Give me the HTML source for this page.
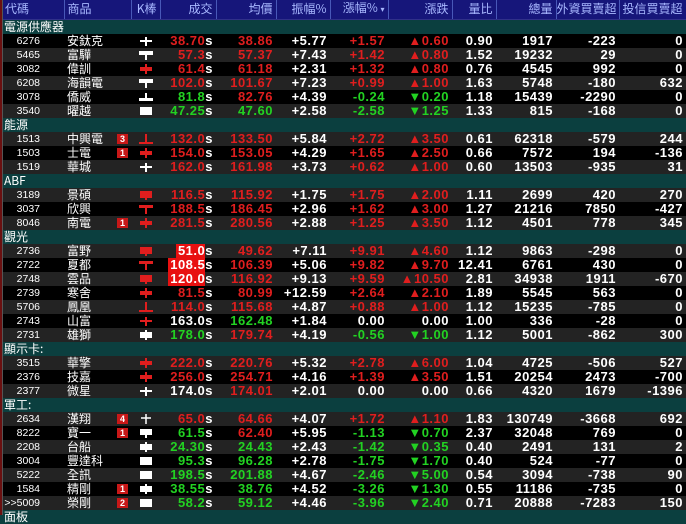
<!DOCTYPE html>
<html><head><meta charset="utf-8"><style>
*{margin:0;padding:0;box-sizing:border-box}
body{width:686px;height:515px;overflow:hidden;background:#000;font-family:"Liberation Sans","Noto Sans CJK TC",sans-serif;position:relative}
table{border-collapse:collapse;table-layout:fixed;width:686px}
td{height:14px;line-height:14px;white-space:nowrap;overflow:hidden;padding:0;font-size:13px;font-weight:bold;color:#fff;text-align:right;padding-right:3px;letter-spacing:0.5px}
tr.h td{height:19px;background:#16167a;color:#a8b8ff;font-weight:normal;font-size:12px;letter-spacing:0;border-right:1px solid #4858b8;border-bottom:1px solid #30308a;font-family:"Noto Sans CJK TC",sans-serif}
tr.gp td{background:#0b3f3f;color:#fff;font-weight:normal;font-size:12px;letter-spacing:0;text-align:left;padding-left:4px;font-family:"Noto Sans CJK TC",sans-serif}
tr:nth-child(odd) td{background:#000}
tr:nth-child(even) td{background:#232323}
tr.gp td{background:#0b3f3f !important}
tr.h td{background:#16167a !important}
td.c{font-weight:normal;font-size:10.5px;letter-spacing:0;padding-right:24px;color:#fff}
td.n{font-weight:normal;font-size:12px;letter-spacing:0;text-align:left;padding-left:3px;position:relative;font-family:"Noto Sans CJK TC",sans-serif;overflow:visible}
td.k{text-align:center;padding:0}
td.k svg{vertical-align:middle}
.r{color:#e01e1e}.g{color:#22d222}.w{color:#fff}
.lim{background:#e81010;color:#fff;padding-left:2px}
.s{color:#fff}
.b{position:absolute;left:53px;top:2px;width:11px;height:10px;background:#c81818;color:#fff;font-size:9px;line-height:10px;text-align:center;font-family:"Liberation Sans",sans-serif;font-weight:bold}
.lb{position:absolute;left:0;top:0;width:2px;height:515px;background:#6a1010}
.lb2{position:absolute;left:2px;top:0;width:1px;height:515px;background:#555}
</style></head><body>
<svg width="0" height="0" style="position:absolute"><defs>
<g id="cw"><path d="M2 6H14M8 2V11" stroke="#fff" stroke-width="2"/></g>
<g id="cr"><path d="M2 6H14M8 2V11" stroke="#e01e1e" stroke-width="2"/></g>
<g id="tw"><rect x="1" y="2" width="14" height="4" fill="#fff"/><rect x="7" y="6" width="2" height="5" fill="#fff"/></g>
<g id="tr"><rect x="1" y="2" width="14" height="3" fill="#e01e1e"/><rect x="7" y="5" width="2" height="6" fill="#e01e1e"/></g>
<g id="iw"><rect x="7" y="2" width="2" height="6" fill="#fff"/><rect x="1" y="7" width="14" height="3" fill="#fff"/></g>
<g id="ir"><rect x="7" y="1" width="2" height="8" fill="#e01e1e"/><rect x="1" y="9" width="14" height="2" fill="#e01e1e"/></g>
<g id="bw"><rect x="2" y="2" width="12" height="8" fill="#fff"/></g>
<g id="br"><rect x="2" y="2" width="12" height="7" fill="#e01e1e"/><rect x="7" y="9" width="2" height="2" fill="#e01e1e"/></g>
<g id="xr"><rect x="2" y="4" width="12" height="4" fill="#e01e1e"/><rect x="7" y="1" width="2" height="10" fill="#e01e1e"/></g>
<g id="xw"><rect x="2" y="3" width="12" height="6" fill="#fff"/><rect x="7" y="1" width="2" height="10" fill="#fff"/></g>
<g id="pw"><rect x="2" y="2" width="12" height="6" fill="#fff"/><rect x="7" y="8" width="2" height="3" fill="#fff"/></g>
<g id="tc"><path d="M3 5H13M8 1V11" stroke="#fff" stroke-width="1.5"/></g>
</defs></svg>
<table>
<colgroup><col width="64"><col width="67"><col width="29"><col width="56"><col width="60"><col width="54"><col width="58"><col width="64"><col width="44"><col width="60"><col width="63"><col width="67"></colgroup>
<tr class="h"><td style="text-align:left;padding-left:5px">代碼</td><td style="text-align:left;padding-left:3px">商品</td><td>K棒</td><td>成交</td><td>均價</td><td>振幅%</td><td>漲幅% <span style="font-size:8px">▾</span></td><td>漲跌</td><td>量比</td><td>總量</td><td>外資買賣超</td><td>投信買賣超</td></tr>
<tr class="gp"><td colspan="12">電源供應器</td></tr>
<tr><td class="c">6276</td><td class="n">安鈦克</td><td class="k"><svg width="16" height="12"><use href="#cw"/></svg></td><td class="r">38.70<span class="s">s</span></td><td class="r">38.86</td><td>+5.77</td><td class="r">+1.57</td><td class="r">▲0.60</td><td>0.90</td><td>1917</td><td>-223</td><td>0</td></tr>
<tr><td class="c">5465</td><td class="n">富驊</td><td class="k"><svg width="16" height="12"><use href="#tw"/></svg></td><td class="r">57.3<span class="s">s</span></td><td class="r">57.37</td><td>+7.43</td><td class="r">+1.42</td><td class="r">▲0.80</td><td>1.52</td><td>19232</td><td>29</td><td>0</td></tr>
<tr><td class="c">3082</td><td class="n">偉訓</td><td class="k"><svg width="16" height="12"><use href="#xr"/></svg></td><td class="r">61.4<span class="s">s</span></td><td class="r">61.18</td><td>+2.31</td><td class="r">+1.32</td><td class="r">▲0.80</td><td>0.76</td><td>4545</td><td>992</td><td>0</td></tr>
<tr><td class="c">6208</td><td class="n">海韻電</td><td class="k"><svg width="16" height="12"><use href="#tw"/></svg></td><td class="r">102.0<span class="s">s</span></td><td class="r">101.67</td><td>+7.23</td><td class="r">+0.99</td><td class="r">▲1.00</td><td>1.63</td><td>5748</td><td>-180</td><td>632</td></tr>
<tr><td class="c">3078</td><td class="n">僑威</td><td class="k"><svg width="16" height="12"><use href="#iw"/></svg></td><td class="g">81.8<span class="s">s</span></td><td class="r">82.76</td><td>+4.39</td><td class="g">-0.24</td><td class="g">▼0.20</td><td>1.18</td><td>15439</td><td>-2290</td><td>0</td></tr>
<tr><td class="c">3540</td><td class="n">曜越</td><td class="k"><svg width="16" height="12"><use href="#bw"/></svg></td><td class="g">47.25<span class="s">s</span></td><td class="g">47.60</td><td>+2.58</td><td class="g">-2.58</td><td class="g">▼1.25</td><td>1.33</td><td>815</td><td>-168</td><td>0</td></tr>
<tr class="gp"><td colspan="12">能源</td></tr>
<tr><td class="c">1513</td><td class="n">中興電<span class="b">3</span></td><td class="k"><svg width="16" height="12"><use href="#ir"/></svg></td><td class="r">132.0<span class="s">s</span></td><td class="r">133.50</td><td>+5.84</td><td class="r">+2.72</td><td class="r">▲3.50</td><td>0.61</td><td>62318</td><td>-579</td><td>244</td></tr>
<tr><td class="c">1503</td><td class="n">士電<span class="b">1</span></td><td class="k"><svg width="16" height="12"><use href="#xr"/></svg></td><td class="r">154.0<span class="s">s</span></td><td class="r">153.05</td><td>+4.29</td><td class="r">+1.65</td><td class="r">▲2.50</td><td>0.66</td><td>7572</td><td>194</td><td>-136</td></tr>
<tr><td class="c">1519</td><td class="n">華城</td><td class="k"><svg width="16" height="12"><use href="#cw"/></svg></td><td class="r">162.0<span class="s">s</span></td><td class="r">161.98</td><td>+3.73</td><td class="r">+0.62</td><td class="r">▲1.00</td><td>0.60</td><td>13503</td><td>-935</td><td>31</td></tr>
<tr class="gp"><td colspan="12">ABF</td></tr>
<tr><td class="c">3189</td><td class="n">景碩</td><td class="k"><svg width="16" height="12"><use href="#br"/></svg></td><td class="r">116.5<span class="s">s</span></td><td class="r">115.92</td><td>+1.75</td><td class="r">+1.75</td><td class="r">▲2.00</td><td>1.11</td><td>2699</td><td>420</td><td>270</td></tr>
<tr><td class="c">3037</td><td class="n">欣興</td><td class="k"><svg width="16" height="12"><use href="#tr"/></svg></td><td class="r">188.5<span class="s">s</span></td><td class="r">186.45</td><td>+2.96</td><td class="r">+1.62</td><td class="r">▲3.00</td><td>1.27</td><td>21216</td><td>7850</td><td>-427</td></tr>
<tr><td class="c">8046</td><td class="n">南電<span class="b">1</span></td><td class="k"><svg width="16" height="12"><use href="#xr"/></svg></td><td class="r">281.5<span class="s">s</span></td><td class="r">280.56</td><td>+2.88</td><td class="r">+1.25</td><td class="r">▲3.50</td><td>1.12</td><td>4501</td><td>778</td><td>345</td></tr>
<tr class="gp"><td colspan="12">觀光</td></tr>
<tr><td class="c">2736</td><td class="n">富野</td><td class="k"><svg width="16" height="12"><use href="#br"/></svg></td><td><span class="lim">51.0</span>s</td><td class="r">49.62</td><td>+7.11</td><td class="r">+9.91</td><td class="r">▲4.60</td><td>1.12</td><td>9863</td><td>-298</td><td>0</td></tr>
<tr><td class="c">2722</td><td class="n">夏都</td><td class="k"><svg width="16" height="12"><use href="#tr"/></svg></td><td><span class="lim">108.5</span>s</td><td class="r">106.39</td><td>+5.06</td><td class="r">+9.82</td><td class="r">▲9.70</td><td>12.41</td><td>6761</td><td>430</td><td>0</td></tr>
<tr><td class="c">2748</td><td class="n">雲品</td><td class="k"><svg width="16" height="12"><use href="#br"/></svg></td><td><span class="lim">120.0</span>s</td><td class="r">116.92</td><td>+9.13</td><td class="r">+9.59</td><td class="r">▲10.50</td><td>2.81</td><td>34938</td><td>1911</td><td>-670</td></tr>
<tr><td class="c">2739</td><td class="n">寒舍</td><td class="k"><svg width="16" height="12"><use href="#xr"/></svg></td><td class="r">81.5<span class="s">s</span></td><td class="r">80.99</td><td>+12.59</td><td class="r">+2.64</td><td class="r">▲2.10</td><td>1.89</td><td>5545</td><td>563</td><td>0</td></tr>
<tr><td class="c">5706</td><td class="n">鳳凰</td><td class="k"><svg width="16" height="12"><use href="#ir"/></svg></td><td class="r">114.0<span class="s">s</span></td><td class="r">115.68</td><td>+4.87</td><td class="r">+0.88</td><td class="r">▲1.00</td><td>1.12</td><td>15235</td><td>-785</td><td>0</td></tr>
<tr><td class="c">2743</td><td class="n">山富</td><td class="k"><svg width="16" height="12"><use href="#cr"/></svg></td><td>163.0s</td><td class="g">162.48</td><td>+1.84</td><td>0.00</td><td>0.00</td><td>1.00</td><td>336</td><td>-28</td><td>0</td></tr>
<tr><td class="c">2731</td><td class="n">雄獅</td><td class="k"><svg width="16" height="12"><use href="#xw"/></svg></td><td class="g">178.0<span class="s">s</span></td><td class="r">179.74</td><td>+4.19</td><td class="g">-0.56</td><td class="g">▼1.00</td><td>1.12</td><td>5001</td><td>-862</td><td>300</td></tr>
<tr class="gp"><td colspan="12">顯示卡:</td></tr>
<tr><td class="c">3515</td><td class="n">華擎</td><td class="k"><svg width="16" height="12"><use href="#xr"/></svg></td><td class="r">222.0<span class="s">s</span></td><td class="r">220.76</td><td>+5.32</td><td class="r">+2.78</td><td class="r">▲6.00</td><td>1.04</td><td>4725</td><td>-506</td><td>527</td></tr>
<tr><td class="c">2376</td><td class="n">技嘉</td><td class="k"><svg width="16" height="12"><use href="#xr"/></svg></td><td class="r">256.0<span class="s">s</span></td><td class="r">254.71</td><td>+4.16</td><td class="r">+1.39</td><td class="r">▲3.50</td><td>1.51</td><td>20254</td><td>2473</td><td>-700</td></tr>
<tr><td class="c">2377</td><td class="n">微星</td><td class="k"><svg width="16" height="12"><use href="#cw"/></svg></td><td>174.0s</td><td class="r">174.01</td><td>+2.01</td><td>0.00</td><td>0.00</td><td>0.66</td><td>4320</td><td>1679</td><td>-1396</td></tr>
<tr class="gp"><td colspan="12">軍工:</td></tr>
<tr><td class="c">2634</td><td class="n">漢翔<span class="b">4</span></td><td class="k"><svg width="16" height="12"><use href="#tc"/></svg></td><td class="r">65.0<span class="s">s</span></td><td class="r">64.66</td><td>+4.07</td><td class="r">+1.72</td><td class="r">▲1.10</td><td>1.83</td><td>130749</td><td>-3668</td><td>692</td></tr>
<tr><td class="c">8222</td><td class="n">寶一<span class="b">1</span></td><td class="k"><svg width="16" height="12"><use href="#pw"/></svg></td><td class="g">61.5<span class="s">s</span></td><td class="r">62.40</td><td>+5.95</td><td class="g">-1.13</td><td class="g">▼0.70</td><td>2.37</td><td>32048</td><td>769</td><td>0</td></tr>
<tr><td class="c">2208</td><td class="n">台船</td><td class="k"><svg width="16" height="12"><use href="#xw"/></svg></td><td class="g">24.30<span class="s">s</span></td><td class="g">24.43</td><td>+2.43</td><td class="g">-1.42</td><td class="g">▼0.35</td><td>0.40</td><td>2491</td><td>131</td><td>2</td></tr>
<tr><td class="c">3004</td><td class="n">豐達科</td><td class="k"><svg width="16" height="12"><use href="#bw"/></svg></td><td class="g">95.3<span class="s">s</span></td><td class="g">96.28</td><td>+2.78</td><td class="g">-1.75</td><td class="g">▼1.70</td><td>0.40</td><td>524</td><td>-77</td><td>0</td></tr>
<tr><td class="c">5222</td><td class="n">全訊</td><td class="k"><svg width="16" height="12"><use href="#bw"/></svg></td><td class="g">198.5<span class="s">s</span></td><td class="g">201.88</td><td>+4.67</td><td class="g">-2.46</td><td class="g">▼5.00</td><td>0.54</td><td>3094</td><td>-738</td><td>90</td></tr>
<tr><td class="c">1584</td><td class="n">精剛<span class="b">1</span></td><td class="k"><svg width="16" height="12"><use href="#xw"/></svg></td><td class="g">38.55<span class="s">s</span></td><td class="g">38.76</td><td>+4.52</td><td class="g">-3.26</td><td class="g">▼1.30</td><td>0.55</td><td>11186</td><td>-735</td><td>0</td></tr>
<tr><td class="c">&gt;&gt;5009</td><td class="n">榮剛<span class="b">2</span></td><td class="k"><svg width="16" height="12"><use href="#bw"/></svg></td><td class="g">58.2<span class="s">s</span></td><td class="g">59.12</td><td>+4.46</td><td class="g">-3.96</td><td class="g">▼2.40</td><td>0.71</td><td>20888</td><td>-7283</td><td>150</td></tr>
<tr class="gp"><td colspan="12">面板</td></tr>
</table>
<div class="lb"></div><div class="lb2"></div>
</body></html>
